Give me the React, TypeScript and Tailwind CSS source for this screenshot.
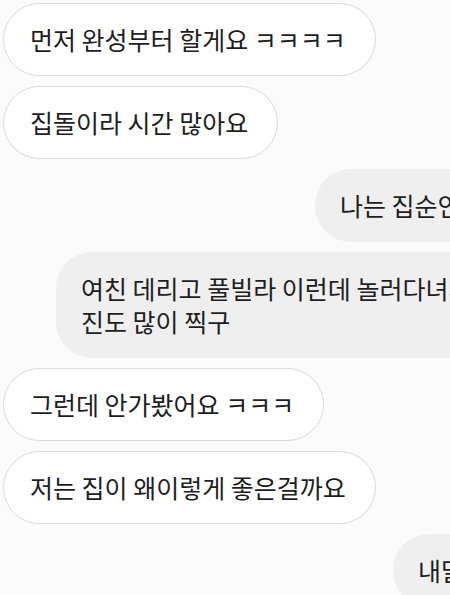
import React from 'react';

type Msg = { lines: string[]; mine?: boolean; left?: string };

const messages: Msg[] = [
  { lines: ['먼저 완성부터 할게요 ㅋㅋㅋㅋ'] },
  { lines: ['집돌이라 시간 많아요'] },
  { lines: ['나는 집순인데'], mine: true, left: 'ml-[315px]' },
  { lines: ['여친 데리고 풀빌라 이런데 놀러다녀서 사', '진도 많이 찍구'], mine: true, left: 'ml-[56px]' },
  { lines: ['그런데 안가봤어요 ㅋㅋㅋ'] },
  { lines: ['저는 집이 왜이렇게 좋은걸까요'] },
  { lines: ['내달'], mine: true, left: 'ml-[393px]' },
];

const Bubble: React.FC<{ msg: Msg }> = ({ msg }) => {
  if (msg.mine) {
    return (
      <div className={`${msg.left} shrink-0 w-max bg-[#efefef] rounded-[36px] pl-[25px] pr-[40px] py-[20px] text-[25px] leading-[33px] text-[#1e1e1e] whitespace-nowrap`}>
        {msg.lines.map((l, i) => (
          <div key={i}>{l}</div>
        ))}
      </div>
    );
  }
  return (
    <div className="ml-[3px] w-max rounded-full border-[1.5px] border-[#dadada] bg-white pl-[26px] pr-[29px] py-[19px] text-[25px] leading-[33px] text-[#1e1e1e] whitespace-nowrap">
      {msg.lines[0]}
    </div>
  );
};

export default function App() {
  return (
    <div
      className="w-[450px] h-[595px] overflow-hidden bg-[#fbfbfb] pt-[3px] flex flex-col gap-[10px]"
      style={{ fontFamily: '"Noto Sans CJK KR", "Noto Sans", sans-serif' }}
    >
      {messages.map((m, i) => (
        <Bubble key={i} msg={m} />
      ))}
    </div>
  );
}
